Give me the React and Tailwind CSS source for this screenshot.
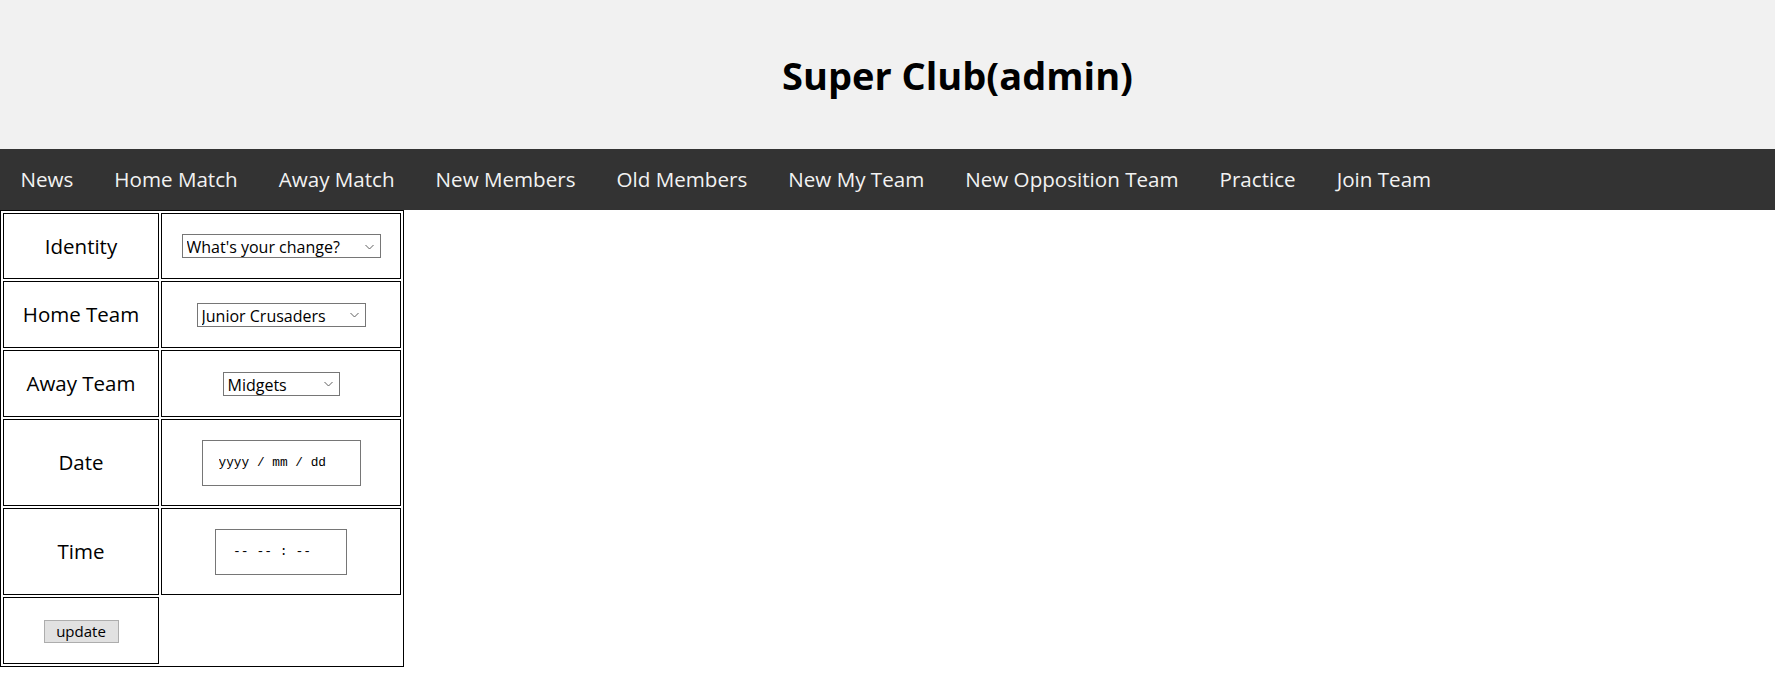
import React from "react";

const navLinks = [
  "News",
  "Home Match",
  "Away Match",
  "New Members",
  "Old Members",
  "New My Team",
  "New Opposition Team",
  "Practice",
  "Join Team",
];

// little chevron the browser draws on a select
const Chevron = () => (
  <svg
    className="pointer-events-none absolute right-[7px] top-1/2 -translate-y-1/2"
    width="9"
    height="6"
    viewBox="0 0 9 6"
    fill="none"
  >
    <path d="M0.5 1L4.5 5L8.5 1" stroke="#606060" strokeWidth="1" />
  </svg>
);

const Select = ({ value, width }) => (
  <div className={`relative inline-block align-middle ${width}`}>
    <select
      defaultValue={value}
      className="h-[24px] w-full appearance-none border border-[#767676] bg-white pl-[4px] pr-[20px] text-left text-[16px] text-black outline-none font-['Open_Sans',sans-serif]"
    >
      <option>{value}</option>
    </select>
    <Chevron />
  </div>
);

const Label = ({ children, h }) => (
  <td className={`${h} w-[156px] border border-black text-center align-middle text-[20.5px] text-black`}>
    {children}
  </td>
);

const App = () => {
  return (
    <div className="min-h-screen bg-white font-['Open_Sans',sans-serif]">
      {/* header */}
      <div className="flex h-[149px] items-center justify-center bg-[#f1f1f1] pl-[140px]">
        <h1 className="pt-[2px] text-[38px] font-bold text-black">Super Club(admin)</h1>
      </div>

      {/* top nav */}
      <nav className="flex h-[61px] items-center bg-[#333333]">
        {navLinks.map((link) => (
          <a
            key={link}
            href="#"
            className="flex h-full items-center px-[20.5px] text-[20.6px] text-[#f2f2f2]"
          >
            {link}
          </a>
        ))}
      </nav>

      {/* match form */}
      <table className="border-separate border-spacing-[2px] border border-black">
        <tbody>
          <tr>
            <Label h="h-[66px]">Identity</Label>
            <td className="w-[240px] border border-black text-center align-middle">
              <Select value="What's your change?" width="w-[199px]" />
            </td>
          </tr>
          <tr>
            <Label h="h-[67px]">Home Team</Label>
            <td className="border border-black text-center align-middle">
              <Select value="Junior Crusaders" width="w-[169px]" />
            </td>
          </tr>
          <tr>
            <Label h="h-[67px]">Away Team</Label>
            <td className="border border-black text-center align-middle">
              <Select value="Midgets" width="w-[117px]" />
            </td>
          </tr>
          <tr>
            <Label h="h-[87px]">Date</Label>
            <td className="border border-black text-center align-middle">
              <input
                type="text"
                readOnly
                value="yyyy / mm / dd"
                className="h-[46px] w-[159px] border border-[#767676] bg-white pl-[16px] align-middle text-[12.8px] text-black outline-none font-['Liberation_Mono',monospace]"
              />
            </td>
          </tr>
          <tr>
            <Label h="h-[87px]">Time</Label>
            <td className="border border-black text-center align-middle">
              <input
                type="text"
                readOnly
                value="-- -- : --"
                className="h-[46px] w-[132px] border border-[#767676] bg-white pl-[17px] align-middle text-[13px] text-black outline-none font-['Liberation_Mono',monospace]"
              />
            </td>
          </tr>
          <tr>
            <td className="h-[67px] w-[156px] border border-black text-center align-middle">
              <button className="h-[23px] w-[75px] border border-[#adadad] bg-[#e1e1e1] text-[15px] leading-none text-black">
                update
              </button>
            </td>
          </tr>
        </tbody>
      </table>
    </div>
  );
};

export default App;
